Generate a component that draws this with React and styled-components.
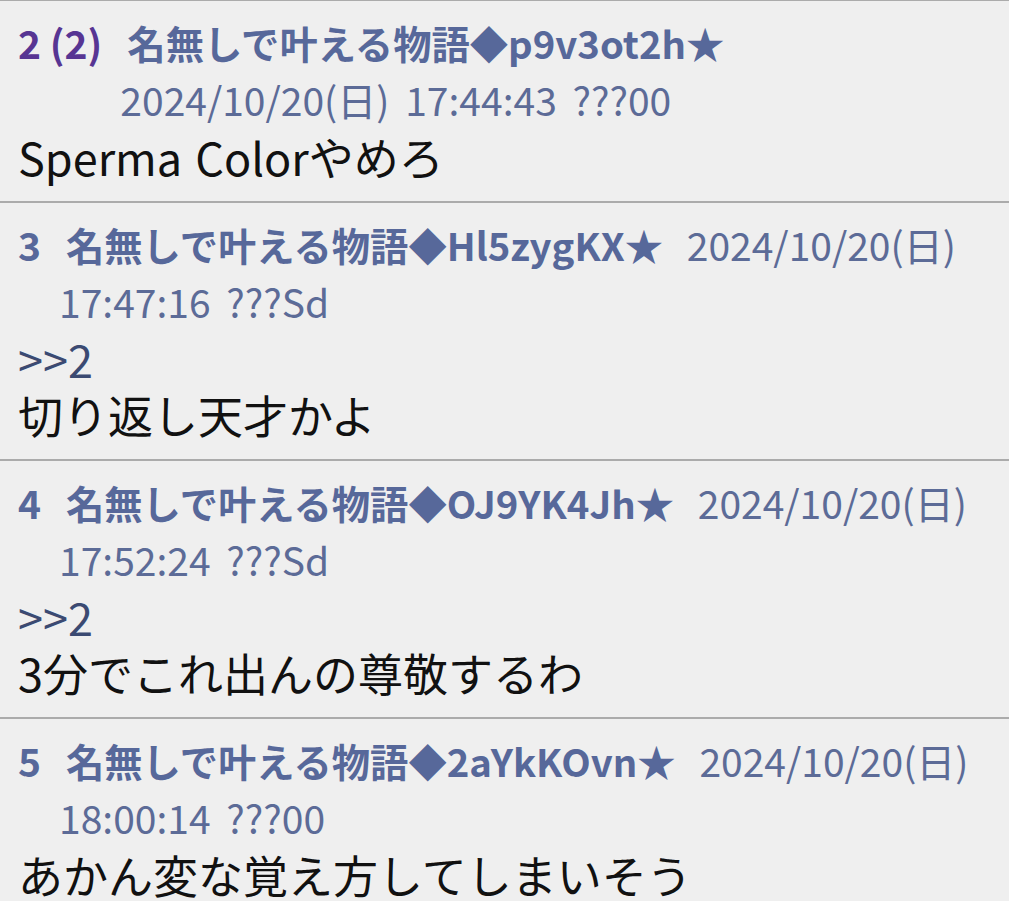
import React from "react";
import styled, { createGlobalStyle } from "styled-components";

const Global = createGlobalStyle`
  html, body { margin: 0; padding: 0; background: #efefef; }
  body { font-family: "Noto Sans CJK JP", "Noto Sans", sans-serif; }
`;

const Thread = styled.div`
  display: flex;
  flex-direction: column;
  margin-top: -1px;
  background: #efefef;
`;

const Post = styled.article`
  border-top: 2px solid #ababab;
  padding: 13px 18px 16px 18px;
`;

const Header = styled.div`
  display: flex;
  align-items: flex-start;
  font-size: 39px;
  line-height: 56px;
  color: #57689a;
`;

const Num = styled.span`
  flex: none;
  font-weight: 700;
  margin-right: 18px;
  color: ${(p) => (p.$replied ? "#573593" : "#57689a")};
`;

const Meta = styled.div`
  flex: 1;
  min-width: 0;
  word-spacing: 7px;
`;

const Name = styled.span`
  font-weight: 700;
  font-size: 38.3px;
  padding-left: 7px;
  padding-right: 8px;
`;

const DatePart = styled.span`
  white-space: nowrap;
  color: #5c6b97;
`;

const Body = styled.div`
  margin-top: 2px;
  font-size: 45px;
  line-height: 56px;
  word-spacing: 3px;
  color: #111;
`;

const Anchor = styled.a`
  display: block;
  color: #3b4a72;
  text-decoration: none;
`;

const posts = [
  {
    num: "2 (2)",
    replied: true,
    name: "名無しで叶える物語◆p9v3ot2h★",
    date: "2024/10/20(日)",
    time: "17:44:43 ???00",
    anchor: null,
    text: "Sperma Colorやめろ",
  },
  {
    num: "3",
    name: "名無しで叶える物語◆Hl5zygKX★",
    date: "2024/10/20(日)",
    time: "17:47:16 ???Sd",
    anchor: ">>2",
    text: "切り返し天才かよ",
  },
  {
    num: "4",
    name: "名無しで叶える物語◆OJ9YK4Jh★",
    date: "2024/10/20(日)",
    time: "17:52:24 ???Sd",
    anchor: ">>2",
    text: "3分でこれ出んの尊敬するわ",
  },
  {
    num: "5",
    name: "名無しで叶える物語◆2aYkKOvn★",
    date: "2024/10/20(日)",
    time: "18:00:14 ???00",
    anchor: null,
    text: "あかん変な覚え方してしまいそう",
  },
];

export default function App() {
  return (
    <>
      <Global />
      <Thread>
        {posts.map((p) => (
          <Post key={p.num}>
            <Header>
              <Num $replied={p.replied}>{p.num}</Num>
              <Meta>
                <Name>{p.name}</Name> <DatePart>{p.date}</DatePart>{" "}
                <DatePart>{p.time}</DatePart>
              </Meta>
            </Header>
            <Body>
              {p.anchor && <Anchor href="#">{p.anchor}</Anchor>}
              {p.text}
            </Body>
          </Post>
        ))}
      </Thread>
    </>
  );
}
